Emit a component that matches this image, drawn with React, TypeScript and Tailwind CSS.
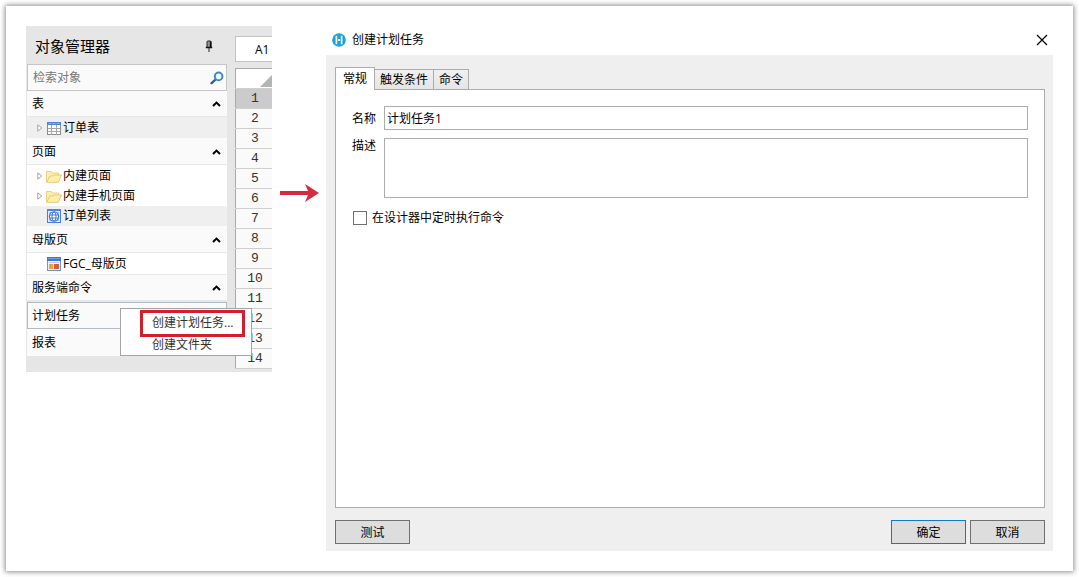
import React, { useState } from 'react'
import clsx from 'clsx'

const ROWS = [1, 2, 3, 4, 5, 6, 7, 8, 9, 10, 11, 12, 13, 14]

const TABS = ['常规', '触发条件', '命令']

function PinIcon() {
  return (
    <svg width="8" height="12" viewBox="0 0 8 12" fill="none" aria-hidden="true">
      <path d="M2 7.5V1.8Q2 1 3 1h2q1 0 1 .8v5.7" fill="#999" stroke="#222" />
      <path d="M5.6 1.5v6M0.8 7.5h6.4" stroke="#111" strokeWidth="1.6" />
      <path d="M4 8v4" stroke="#444" strokeWidth="1.2" />
    </svg>
  )
}

function SearchIcon() {
  return (
    <svg width="14" height="14" viewBox="0 0 14 14" fill="none" aria-hidden="true">
      <path d="M5 9 1.6 12.2" stroke="#34589c" strokeWidth="2.4" strokeLinecap="round" />
      <circle cx="8.6" cy="5.4" r="3.8" fill="#f4faff" stroke="#3d86d0" strokeWidth="2" />
    </svg>
  )
}

function TableIcon() {
  return (
    <svg width="14" height="13" viewBox="0 0 14 13" aria-hidden="true">
      <rect x="0.5" y="0.5" width="13" height="12" fill="#fff" stroke="#8b8b8b" />
      <rect width="14" height="3" fill="#4f86d8" />
      <path d="M1 6.5h12M1 9.5h12M4.5 3v10M9.5 3v10" stroke="#a6a6a6" />
      <path d="M1.5 1.5h3M5.5 1.5h3M9.5 1.5h3" stroke="#8db2ea" />
    </svg>
  )
}

function FolderIcon() {
  return (
    <svg width="16" height="13" viewBox="0 0 16 13" aria-hidden="true">
      <path d="M0.5 12V1.5h4.7l1 1.5h6.3v3" fill="#fdeeb0" stroke="#ecd07e" />
      <path d="M0.7 12.3 3.8 6h3l1-1h7.7l-3.2 7.3z" fill="#fff0ae" stroke="#e9ca70" strokeLinejoin="round" />
    </svg>
  )
}

function PageIcon() {
  return (
    <svg width="14" height="14" viewBox="0 0 14 14" fill="none" aria-hidden="true">
      <rect x="0.5" y="0.5" width="13" height="13" fill="#e6effc" stroke="#4a7fd0" />
      <path d="M0 1h14" stroke="#4a86dd" strokeWidth="2" />
      <path d="M2 3h3L2 6zM12 3H9l3 3zM2 12V9l3 3zM12 12V9l-3 3z" fill="#a9c6f2" />
      <circle cx="7" cy="7.5" r="4.6" fill="#fff" stroke="#3f7ad2" strokeWidth="1.2" />
      <ellipse cx="7" cy="7.5" rx="2" ry="4.5" stroke="#3f7ad2" />
      <path d="M3 6h8M3 9h8" stroke="#3f7ad2" />
    </svg>
  )
}

function MasterPageIcon() {
  return (
    <svg width="14" height="14" viewBox="0 0 14 14" aria-hidden="true">
      <rect x="0.5" y="0.5" width="13" height="13" fill="#eef3fb" stroke="#6f93cf" />
      <rect width="14" height="4" fill="#3f78cd" />
      <path d="M1 1.5h12" stroke="#6d9de6" />
      <rect x="2" y="5" width="10" height="1" fill="#b9cdec" />
      <rect x="2" y="7" width="4" height="5" fill="#f0a13c" />
      <rect x="7" y="7" width="5" height="5" fill="#dc5b3e" />
    </svg>
  )
}

function LogoIcon() {
  return (
    <svg width="14" height="14" viewBox="0 0 14 14" fill="none" aria-hidden="true">
      <circle cx="7" cy="7" r="6.8" fill="#1ba3dc" />
      <path d="M4.4 2.8v8.4M9.6 2.8v8.4" stroke="#fff" strokeWidth="1.6" />
      <path d="M6 7h2" stroke="#fff" strokeWidth="2" />
    </svg>
  )
}

function Expander() {
  return (
    <svg width="6" height="8" viewBox="0 0 6 8" fill="none" aria-hidden="true">
      <path d="M0.8 0.8 4.8 4 0.8 7.2z" fill="#fff" stroke="#a0a0a0" />
    </svg>
  )
}

function GroupHeader({ label, className }: { label: string; className?: string }) {
  return (
    <button
      type="button"
      className={clsx('flex w-full items-center justify-between border-b border-[#e8e8e8] bg-[#fafafa] pt-px pr-[6px] pl-[5px]', className)}
    >
      {label}
      <svg width="9" height="6" viewBox="0 0 9 6" fill="none" aria-hidden="true">
        <path d="M1 5 4.5 1.6 8 5" stroke="#000" strokeWidth="2" />
      </svg>
    </button>
  )
}

interface TreeItemProps {
  label: string
  icon: React.ReactNode
  expandable?: boolean
  shaded?: boolean
}

function TreeItem({ label, icon, expandable, shaded }: TreeItemProps) {
  return (
    <li className={clsx('flex h-5 items-center pl-2', shaded ? 'bg-[#efefef]' : 'bg-white')}>
      <span className="flex w-[10px] shrink-0 justify-center">{expandable && <Expander />}</span>
      <span className="flex w-[18px] shrink-0 justify-center">{icon}</span>
      <span>{label}</span>
    </li>
  )
}

function ContextMenu() {
  return (
    <div className="absolute top-[6px] left-[93px] z-10 w-[132px] border border-[#a5a5a5] bg-white pt-px pb-[2px] text-[#333]">
      <button type="button" className="ml-[19px] flex h-[27px] w-[105px] items-center border-3 border-[#d11f2b] pb-[2px] pl-[9px] whitespace-nowrap">
        创建计划任务...
      </button>
      <button type="button" className="flex h-4 w-full items-center pl-[31px] whitespace-nowrap">
        创建文件夹
      </button>
    </div>
  )
}

function ObjectManager() {
  return (
    <aside className="w-[209px] shrink-0 pr-2 pb-4 pl-px">
      <div className="flex h-[38px] items-center justify-between pt-px pr-[14px] pl-2">
        <h2 className="text-[15px]">对象管理器</h2>
        <button type="button" aria-label="固定">
          <PinIcon />
        </button>
      </div>
      <label className="flex h-[27px] items-center border border-[#c6c6c6] bg-[#fafafa] pr-[2px] pl-[5px]">
        <input type="search" aria-label="检索对象" placeholder="检索对象" className="min-w-0 flex-1 bg-transparent outline-none placeholder:text-[#777]" />
        <SearchIcon />
      </label>

      <GroupHeader label="表" className="h-[26px]" />
      <ul className="bg-[#efefef] pt-px">
        <TreeItem label="订单表" icon={<TableIcon />} expandable shaded />
      </ul>
      <GroupHeader label="页面" className="h-[27px]" />
      <ul className="bg-white pt-px">
        <TreeItem label="内建页面" icon={<FolderIcon />} expandable />
        <TreeItem label="内建手机页面" icon={<FolderIcon />} expandable />
        <TreeItem label="订单列表" icon={<PageIcon />} shaded />
      </ul>
      <GroupHeader label="母版页" className="h-[27px]" />
      <ul className="border-b border-[#e8e8e8] bg-white pt-px">
        <TreeItem label="FGC_母版页" icon={<MasterPageIcon />} />
      </ul>
      <GroupHeader label="服务端命令" className="h-[26px]" />
      <div className="relative mt-px">
        <button type="button" className="flex h-[27px] w-full items-center border border-[#b4bac4] bg-[#fafafa] pl-1">
          计划任务
        </button>
        <ContextMenu />
      </div>
      <button type="button" className="flex h-[27px] w-full items-center bg-[#fafafa] pl-[5px]">
        报表
      </button>
    </aside>
  )
}

function SheetEdge() {
  return (
    <div className="min-w-0 flex-1 overflow-hidden pt-[10px]">
      <input
        aria-label="单元格"
        defaultValue="A1"
        className="block h-[26px] w-20 border border-[#c3c3c3] bg-white pl-[19px] font-[Open_Sans]"
      />
      <table className="mt-[6px] w-full border-collapse border-l border-[#a9a9a9] bg-[#fafafa] font-['Liberation_Mono',monospace] text-[13px] text-[#333]">
        <thead>
          <tr className="h-5 border-t border-[#a9a9a9] bg-white">
            <th aria-label="全选" className="p-0">
              <svg width="12" height="12" viewBox="0 0 12 12" className="mt-1 ml-auto block" aria-hidden="true">
                <path d="M12 0v12H0z" fill="#b4b4b4" />
              </svg>
            </th>
          </tr>
        </thead>
        <tbody>
          {ROWS.map((n) => (
            <tr key={n} className={clsx('h-5 border-y border-[#cfcfcf]', n === 1 && 'bg-[#cbcbcb]')}>
              <th scope="row" className="p-0 pl-[2px] text-center leading-4 font-normal">{n}</th>
            </tr>
          ))}
        </tbody>
      </table>
    </div>
  )
}

function TaskDialog() {
  const [tab, setTab] = useState(TABS[0])

  return (
    <section role="dialog" aria-labelledby="dialog-title" className="flex min-w-0 flex-1 flex-col">
      <header className="flex h-[29px] items-center gap-[6px] pr-[5px] pb-[2px] pl-[6px]">
        <LogoIcon />
        <h1 id="dialog-title" className="flex-1">创建计划任务</h1>
        <button type="button" aria-label="关闭">
          <svg width="12" height="12" viewBox="0 0 12 12" fill="none" aria-hidden="true">
            <path d="M1 1l10 10M11 1 1 11" stroke="#000" strokeWidth="1.2" />
          </svg>
        </button>
      </header>

      <div className="flex flex-1 flex-col bg-[#efefef] px-2 pt-3 pb-[7px] pl-[9px]">
        <div role="tablist" className="relative -mb-px flex items-end">
          {TABS.map((name) => (
            <button
              key={name}
              type="button"
              role="tab"
              aria-selected={tab === name}
              onClick={() => setTab(name)}
              className={clsx(
                'border border-[#acacac]',
                tab === name
                  ? 'h-[23px] border-b-0 bg-white px-[7px]'
                  : '-ml-px h-[21px] bg-linear-to-b from-[#f0f0f0] to-[#e5e5e5] px-[5px]',
              )}
            >
              {name}
            </button>
          ))}
        </div>

        <div role="tabpanel" className="flex-1 border border-[#acacac] bg-white px-4 pt-4">
          <div className="flex items-center">
            <label htmlFor="task-name" className="w-8 shrink-0 pt-px">名称</label>
            <input id="task-name" defaultValue="计划任务1" className="h-6 min-w-0 flex-1 border border-[#acacac] px-[2px] outline-none" />
          </div>
          <div className="mt-2 flex items-start">
            <label htmlFor="task-desc" className="w-8 shrink-0">描述</label>
            <textarea id="task-desc" className="h-[60px] min-w-0 flex-1 resize-none border border-[#acacac] px-[2px] outline-none" />
          </div>
          <label className="mt-3 ml-px flex items-center gap-[5px]">
            <input type="checkbox" className="size-[14px] appearance-none border border-[#707070] bg-white checked:bg-[#1a9cd8]" />
            在设计器中定时执行命令
          </label>
        </div>

        <footer className="mt-3 flex gap-1">
          <button type="button" className="mr-auto h-6 w-[75px] border border-[#707070] bg-[#ddd] pt-px">测试</button>
          <button type="button" className="h-6 w-[75px] border border-[#1976c0] bg-[#ddd] pt-px">确定</button>
          <button type="button" className="h-6 w-[75px] border border-[#707070] bg-[#ddd] pt-px">取消</button>
        </footer>
      </div>
    </section>
  )
}

export default function App() {
  return (
    <div className="flex min-h-screen bg-white p-[6px] font-['Open_Sans','Noto_Sans_CJK_SC',sans-serif] text-[12px] leading-4 text-black">
      <main className="flex min-w-0 flex-1 bg-white p-5 shadow-[0_0_5px_1px_rgba(0,0,0,0.45)]">
        <div className="flex w-[246px] shrink-0 self-start overflow-hidden bg-[#e6e6e6]">
          <ObjectManager />
          <SheetEdge />
        </div>
        <svg width="40" height="20" viewBox="0 0 40 20" className="mx-[7px] mt-[157px] shrink-0" aria-hidden="true">
          <path d="M1 8h28l-3-7 14 9-14 9 3-7H1z" fill="#d42c3c" />
        </svg>
        <TaskDialog />
      </main>
    </div>
  )
}
